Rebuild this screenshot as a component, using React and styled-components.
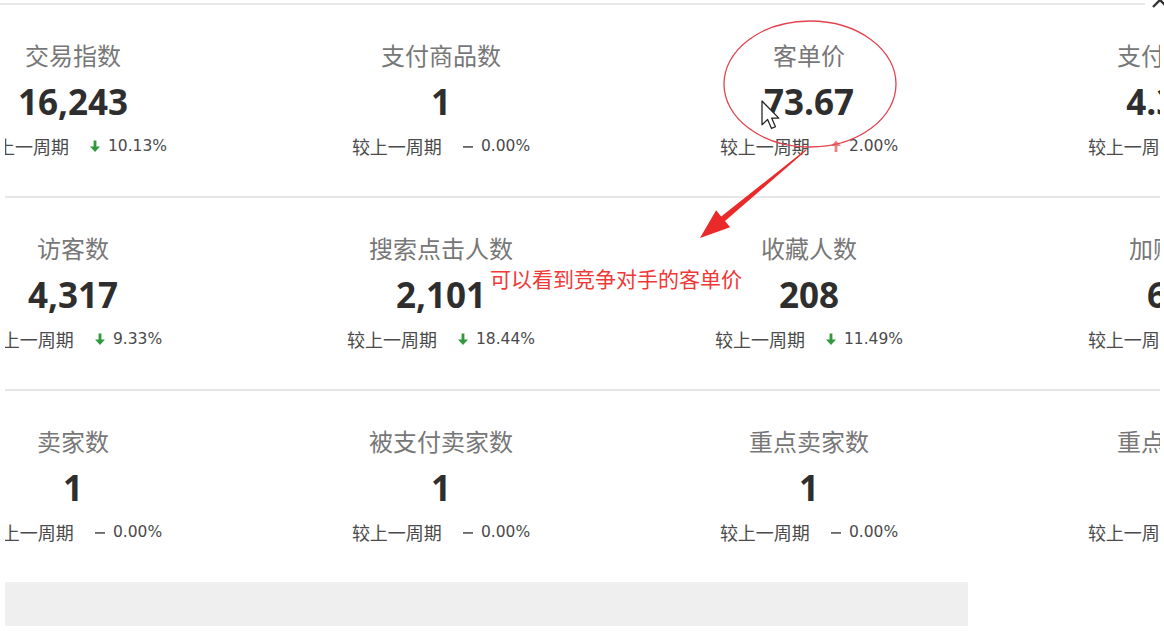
import React from "react";
import styled, { createGlobalStyle } from "styled-components";

const GlobalStyle = createGlobalStyle`
  body {
    margin: 0;
    background: #fff;
    font-family: "Noto Sans", "Noto Sans CJK SC", sans-serif;
  }
`;

const rows = [
  [
    { title: "交易指数", value: "16,243", trend: "down", rate: "10.13%" },
    { title: "支付商品数", value: "1", trend: "flat", rate: "0.00%" },
    { title: "客单价", value: "73.67", trend: "up", rate: "2.00%" },
    { title: "支付转化率", value: "4.31%", trend: "down", rate: "3.05%" },
  ],
  [
    { title: "访客数", value: "4,317", trend: "down", rate: "9.33%" },
    { title: "搜索点击人数", value: "2,101", trend: "down", rate: "18.44%" },
    { title: "收藏人数", value: "208", trend: "down", rate: "11.49%" },
    { title: "加购人数", value: "612", trend: "down", rate: "7.21%" },
  ],
  [
    { title: "卖家数", value: "1", trend: "flat", rate: "0.00%" },
    { title: "被支付卖家数", value: "1", trend: "flat", rate: "0.00%" },
    { title: "重点卖家数", value: "1", trend: "flat", rate: "0.00%" },
    { title: "重点买家数", value: "1", trend: "flat", rate: "0.00%" },
  ],
];

const TrendIcon = ({ trend }) => {
  if (trend === "flat") {
    return (
      <svg width="12" height="14" viewBox="0 0 12 14">
        <rect x="1" y="7" width="10" height="1.8" fill="#666" />
      </svg>
    );
  }
  const color = trend === "down" ? "#2f9a3c" : "#ef8080";
  const d =
    trend === "down"
      ? "M4.6 1.5h2.8v6h3.6L6 13 1 7.5h3.6z"
      : "M4.6 13h2.8V7h3.6L6 1.5 1 7h3.6z";
  return (
    <svg width="12" height="14" viewBox="0 0 12 14">
      <path d={d} fill={color} />
    </svg>
  );
};

const App = () => {
  return (
    <>
      <GlobalStyle />
      <Page>
        <TopLine />
        <Panel>
          {rows.map((row, i) => (
            <Row key={i} last={i === rows.length - 1}>
              <Grid>
                {row.map((item) => (
                  <Cell key={item.title}>
                    <Title>{item.title}</Title>
                    <Value>{item.value}</Value>
                    <Compare>
                      <span>较上一周期</span>
                      <Trend>
                        <TrendIcon trend={item.trend} />
                        <Rate>{item.rate}</Rate>
                      </Trend>
                    </Compare>
                  </Cell>
                ))}
              </Grid>
            </Row>
          ))}
        </Panel>
        <GrayBar />

        <Close>
          <svg width="20" height="20" viewBox="0 0 20 20">
            <path d="M3 3L17 17M17 3L3 17" stroke="#333" strokeWidth="2.4" />
          </svg>
        </Close>

        <Marks width="1164" height="631" viewBox="0 0 1164 631">
          <ellipse
            cx="810"
            cy="84"
            rx="86"
            ry="63"
            fill="none"
            stroke="#e2434f"
            strokeWidth="1.3"
          />
          <polygon
            points="806.3,150.4 725,221.1 730.1,227.3 700,238 716.1,210.3 721.2,216.5 805.7,149.6"
            fill="#ea2a2a"
          />
          <path
            transform="translate(762 101) scale(1.4)"
            d="M0 0L0 17L4 13.2L6.8 19.6L9.6 18.4L6.9 12.2L12 12.2Z"
            fill="#fff"
            stroke="#222"
            strokeWidth="0.9"
            strokeLinejoin="round"
          />
        </Marks>
        <Note>可以看到竞争对手的客单价</Note>
      </Page>
    </>
  );
};

const Page = styled.div`
  position: relative;
  width: 1164px;
  height: 631px;
  overflow: hidden;
  background: #fff;
`;

const TopLine = styled.div`
  margin-top: 3px;
  width: 1145px;
  height: 2px;
  background: #e8e8e8;
`;

const Panel = styled.div`
  margin-left: 5px;
  width: 1155px;
  overflow: hidden;
`;

const Row = styled.div`
  height: 191px;
  border-bottom: ${(p) => (p.last ? "none" : "2px solid #e6e6e6")};
`;

const Grid = styled.div`
  display: grid;
  grid-template-columns: repeat(4, 368px);
  margin-left: -116px;
`;

const Cell = styled.div`
  display: flex;
  flex-direction: column;
  align-items: center;
  padding-top: 35px;
`;

const Title = styled.div`
  font-family: "Noto Sans CJK SC", sans-serif;
  font-size: 24px;
  line-height: 30px;
  color: #777;
  white-space: nowrap;
`;

const Value = styled.div`
  margin-top: 12px;
  font-family: "Open Sans", "Noto Sans", sans-serif;
  font-weight: 700;
  font-size: 35px;
  line-height: 40px;
  color: #2e2e2e;
  white-space: nowrap;
`;

const Compare = styled.div`
  margin-top: 14px;
  display: flex;
  align-items: center;
  gap: 20px;
  font-family: "Noto Sans CJK SC", sans-serif;
  font-size: 18px;
  line-height: 20px;
  color: #4a4a4a;
  white-space: nowrap;
`;

const Trend = styled.span`
  display: flex;
  align-items: center;
  gap: 7px;
`;

const Rate = styled.span`
  font-family: "DejaVu Sans", sans-serif;
  font-size: 15.5px;
  color: #4a4a4a;
`;

const GrayBar = styled.div`
  margin-left: 5px;
  width: 963px;
  height: 44px;
  background: #efefef;
`;

const Close = styled.div`
  position: absolute;
  top: -10px;
  right: -6px;
`;

const Marks = styled.svg`
  position: absolute;
  left: 0;
  top: 0;
  pointer-events: none;
`;

const Note = styled.div`
  position: absolute;
  left: 490px;
  top: 265px;
  font-family: "Noto Sans CJK SC", sans-serif;
  font-size: 21px;
  line-height: 26px;
  color: #f03838;
  white-space: nowrap;
`;

export default App;
